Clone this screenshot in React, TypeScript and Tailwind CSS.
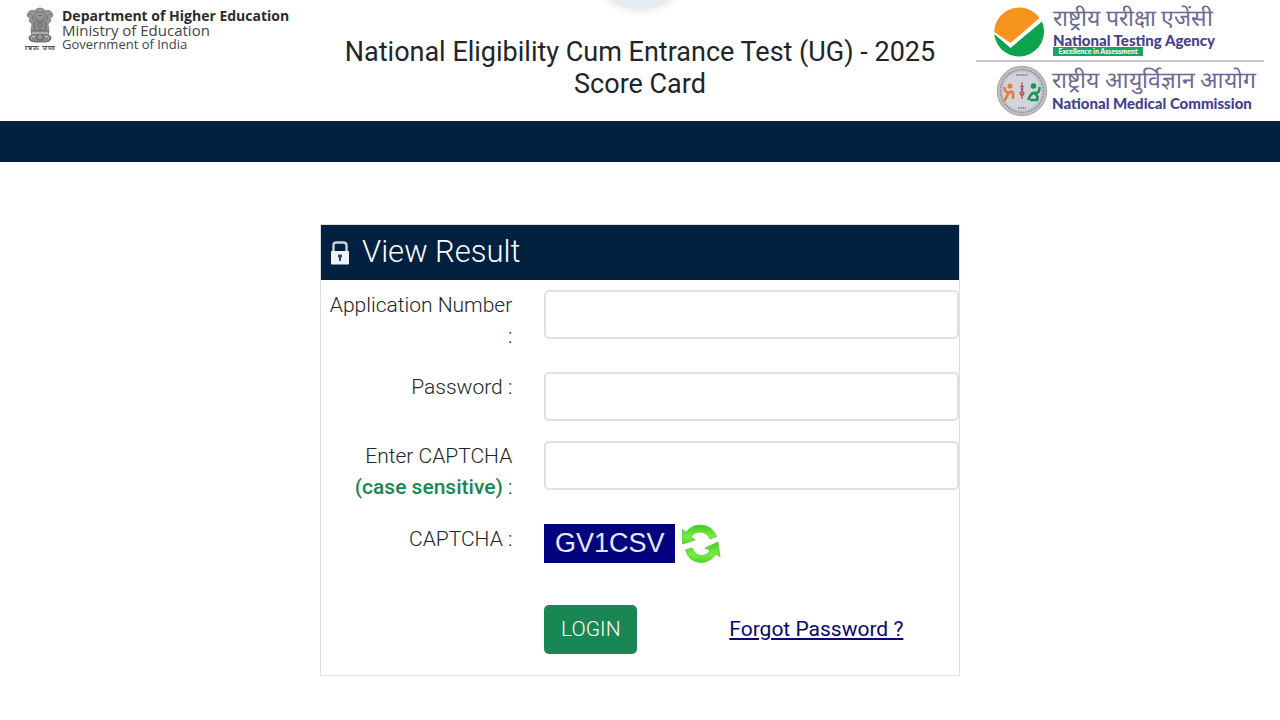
import type { ReactNode } from "react";

function Emblem() {
  return (
    <svg viewBox="0 0 32 44" className="h-11 w-8 shrink-0" role="img" aria-label="State Emblem of India">
      <g fill="#959595" stroke="#707070" strokeWidth="0.7">
        <path d="M11 4 Q12 1 16 1 Q20 1 21 4 L22 9 L20 18 H12 L10 9Z" />
        <path d="M11 4 Q6 2 4 6 L3 9 L6 11 L5 14 L8 17 L7 23 H14 L12 12Z" />
        <path d="M21 4 Q26 2 28 6 L29 9 L26 11 L27 14 L24 17 L25 23 H18 L20 12Z" />
        <path d="M12 13 L11 24 H21 L20 13Q16 17 12 13Z" />
      </g>
      <g fill="none" stroke="#5c5c5c" strokeWidth="0.8">
        <path d="M13 5h2M17 5h2M14 8q2 2 4 0M5 7h2M25 7h2M9 8v5M23 8v5M14 12v9M18 12v9M10 15v7M22 15v7M16 14v9" />
      </g>
      <path d="M7 24 Q16 22 25 24 L24 28 Q28 29 27 32 Q26 35 21 35 H11 Q6 35 5 32 Q4 29 8 28Z" fill="#858585" stroke="#5c5c5c" strokeWidth="0.8" />
      <circle cx="16" cy="30" r="3" fill="#ccc" stroke="#444" strokeWidth="0.8" />
      <path d="M16 27v6M13 30h6M14 28l4 4M18 28l-4 4" stroke="#555" strokeWidth="0.5" />
      <path d="M7 31q2-3 4-1M25 31q-2-3-4-1M8 26h16" fill="none" stroke="#ddd" strokeWidth="0.9" />
      <path d="M1 39.5h14M18 39.5h13" stroke="#555" strokeWidth="1" />
      <path d="M2 40v3M4 41h2v2M7 40v3M9 41q2 0 1 2M12 40v3M14 41v2M19 41q2 0 1 2M22 40v3M24 41h2v2M28 40v3M30 40v3" fill="none" stroke="#555" strokeWidth="1.1" />
    </svg>
  );
}

function AgencyLogo() {
  return (
    <svg viewBox="0 0 52 52" className="size-13 shrink-0" role="img" aria-label="National Testing Agency logo">
      <path d="M1.2 27.500 A25 25 0 0 1 46.5 13 L17.500 38 L2 27.500Z" fill="#f7941d" />
      <path d="M1.2 29 L17.500 43 L49 16.500 A25 25 0 1 1 1.2 29Z" fill="#0ca34f" />
    </svg>
  );
}

function CommissionLogo() {
  return (
    <svg viewBox="0 0 52 52" className="size-13 shrink-0" role="img" aria-label="National Medical Commission logo">
      <circle cx="26" cy="26" r="24.5" fill="#c6c6cc" stroke="#b3aca5" strokeWidth="1.5" />
      <circle cx="26" cy="26" r="21.5" fill="none" stroke="#8c8fa6" strokeWidth="1.8" strokeDasharray="1.6 1" />
      <circle cx="26" cy="26" r="19" fill="#d3d4da" />
      <path d="M20 10h12M22 43h8" stroke="#777a9b" strokeWidth="1.6" strokeDasharray="1.5 0.8" />
      <g fill="none" strokeWidth="2.6" strokeLinecap="round">
        <path d="M8.500 23 Q9.500 29 14 27 Q18 25 17 33 M12 29 L9 35" stroke="#e8793a" />
        <path d="M43.500 23 Q43.500 29 38 28 Q36 27 32.500 34 M38 28 Q43 31 41 35 L35 35" stroke="#18945a" />
      </g>
      <circle cx="14" cy="21" r="2.600" fill="#e8793a" />
      <circle cx="37.500" cy="21" r="2.800" fill="#18945a" />
      <path d="M26 17v17M24 21q4 2 2 5q-4 2 0 5M28 21q-4 2-2 5q4 2 0 5" fill="none" stroke="#b9525b" strokeWidth="1.3" />
    </svg>
  );
}

function LockIcon() {
  return (
    <svg viewBox="0 0 20 26" className="h-[26px] w-5" aria-hidden="true">
      <path d="M3.500 13V5.500Q3.500 2.500 6.500 2.500H13.500Q16.500 2.500 16.500 5.500V13" fill="none" stroke="#cbd4dd" strokeWidth="2.400" />
      <rect x="1" y="11" width="18" height="13.500" rx="1" fill="#f0f3f6" />
      <path d="M8 14.500h4v3h-1v3.500H9v-3.500H8Z" fill="#38485a" />
    </svg>
  );
}

function RefreshIcon() {
  return (
    <svg viewBox="0 0 40 40" className="size-10" aria-hidden="true">
      <defs>
        <linearGradient id="leaf" x1="0" y1="0" x2="0" y2="1">
          <stop offset="0" stopColor="#43c828" />
          <stop offset="0.6" stopColor="#78ee3c" />
          <stop offset="1" stopColor="#4dd42c" />
        </linearGradient>
      </defs>
      <g fill="url(#leaf)" stroke="#52d034" strokeWidth="0.8" strokeLinejoin="round">
        <path d="M1.500 5 L5 8.500 Q10 1 19 1 Q31 1 35.500 12.500 L29 15 Q26 8 19 8 Q13 8 10 13 L14 16 L1.500 20Z" />
        <path d="M39 33 L35 30 Q29 38.500 20 38.500 Q8 38 4.500 26 L11 24 Q14 31.500 20.500 31.500 Q26 31.500 29 26.500 L24 24 L37 18Z" />
      </g>
    </svg>
  );
}

function Row({ id, label, children }: { id: string; label: ReactNode; children: ReactNode }) {
  return (
    <div className="grid grid-cols-[35%_65%]">
      <label htmlFor={id} className="pr-8 pl-2 text-right leading-[31px]">
        {label}
      </label>
      <div>{children}</div>
    </div>
  );
}

const field = "block h-[49px] w-full rounded-[5px] border-2 border-[#e0e1e3] bg-white px-4 outline-none focus:border-[#86b7fe]";

export default function App() {
  return (
    <div className="min-h-screen bg-white font-[Roboto,'Liberation_Sans',sans-serif] text-[#212529]">
      <header className="relative grid h-[121px] grid-cols-[1fr_2fr_1fr] overflow-hidden">
        <div className="absolute -top-[93px] left-1/2 size-[100px] -translate-x-1/2 rounded-full bg-[#e4eef7] shadow-[0_2px_10px_#00000026]" />
        <div className="flex items-start gap-[6px] pt-[7px] pl-6 font-['Open_Sans','Noto_Sans',sans-serif] whitespace-nowrap">
          <Emblem />
          <div className="pt-[2px] text-[#444]">
            <p className="text-[14px] leading-[14px] font-bold text-[#2c2c2c]">Department of Higher Education</p>
            <p className="text-[15px] leading-[15px]">Ministry of Education</p>
            <p className="text-[13px] leading-[13px]">Government of India</p>
          </div>
        </div>
        <h1 className="px-4 pt-9 text-center text-[27px] leading-8">
          National Eligibility Cum Entrance Test (UG) - 2025 Score Card
        </h1>
        <div className="mr-4 ml-4 whitespace-nowrap text-[#45418f]">
          <div className="flex gap-2 border-b-2 border-[#ccc8ca] pt-[5px] pb-[3px] pl-[17px]">
            <AgencyLogo />
            <div>
              <p className="text-[23px] leading-7 text-[#6c6994]">राष्ट्रीय परीक्षा एजेंसी</p>
              <p className="font-[Lato,sans-serif] text-[15px] leading-[14px] font-black">National Testing Agency</p>
              <p className="w-[90px] bg-[#1aa660] text-center font-[Lato,sans-serif] text-[7px] leading-[9px] font-black text-white">
                Excellence in Assessment
              </p>
            </div>
          </div>
          <div className="flex gap-1 pt-[3px] pl-5">
            <CommissionLogo />
            <div>
              <p className="text-[23px] leading-8 text-[#6c6994]">राष्ट्रीय आयुर्विज्ञान आयोग</p>
              <p className="font-[Lato,sans-serif] text-[15px] leading-3 font-black">National Medical Commission</p>
            </div>
          </div>
        </div>
      </header>
      <div className="h-[41px] bg-[#02203f]" />
      <main className="mx-auto mt-[62px] w-1/2 border border-[#dcdfe2]">
        <h2 className="flex h-[55px] items-center gap-3 bg-[#02203f] pl-[9px] text-[31px] font-light text-white">
          <LockIcon />
          View Result
        </h2>
        <form className="flex flex-col gap-5 pt-[10px] pb-[21px] text-[21px] font-light" onSubmit={(e) => e.preventDefault()}>
          <Row id="application" label="Application Number :">
            <input id="application" type="text" className={field} />
          </Row>
          <Row id="password" label="Password :">
            <input id="password" type="password" className={field} />
          </Row>
          <Row
            id="captcha"
            label={
              <>
                Enter CAPTCHA <span className="font-medium text-[#198754]">(case sensitive)</span> :
              </>
            }
          >
            <input id="captcha" type="text" className={field} />
          </Row>
          <div className="grid h-[62px] grid-cols-[35%_65%] pt-px">
            <span className="pr-8 text-right leading-[31px]">CAPTCHA :</span>
            <div className="flex items-start gap-[6px]">
              <span className="h-[39px] w-[131px] bg-[#02027f] text-center font-['Liberation_Sans',sans-serif] text-[27px] leading-[39px] font-normal text-[#e8e8f8]">
                GV1CSV
              </span>
              <button type="button" aria-label="Refresh CAPTCHA">
                <RefreshIcon />
              </button>
            </div>
          </div>
          <div className="grid grid-cols-[35%_29%_36%] items-center">
            <button type="submit" className="col-start-2 h-[49px] w-[93px] rounded-[5px] bg-[#198754] text-white">
              LOGIN
            </button>
            <a href="#forgot" className="font-normal text-[#080870] underline">
              Forgot Password ?
            </a>
          </div>
        </form>
      </main>
    </div>
  );
}
